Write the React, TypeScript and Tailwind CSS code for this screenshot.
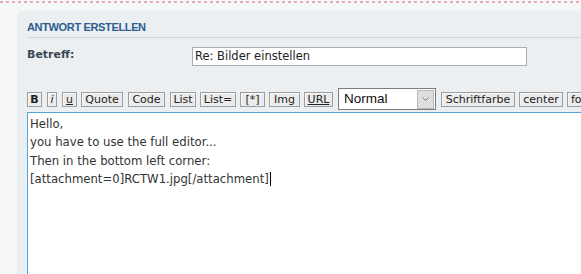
import React from "react";

const btn =
  "h-[15px] shrink-0 border border-[#9d9d9d] bg-[#ebebeb] text-[11px] leading-[13px] text-[#222] flex items-center justify-center shadow-[inset_1px_1px_0_#f8f8f8]";

export default function App() {
  return (
    <div className="w-[581px] h-[274px] overflow-hidden bg-[#f6f7f7] font-['DejaVu_Sans',sans-serif]">
      <div className="h-[2px] mt-[1px] bg-[repeating-linear-gradient(90deg,#e4a8ba_0_3px,transparent_3px_6px)]" />
      <div className="ml-[17px] mt-[8px] h-[300px] rounded-tl-[6px] bg-[#ebeff2] pl-[10px] pt-[10px]">
        <div className="border-b border-[#cfd7dd] pb-[3px] font-['Liberation_Sans',sans-serif] text-[11px] leading-[13px] font-bold tracking-[-0.35px] text-[#2c5d8f]">
          ANTWORT ERSTELLEN
        </div>
        <div className="flex items-start pt-[9px]">
          <div className="mt-[1px] w-[165px] shrink-0 text-[11px] leading-[13px] font-bold text-[#3b4754]">
            Betreff:
          </div>
          <div className="h-[19px] w-[335px] shrink-0 border border-[#a9aeb2] bg-white pl-[2px] text-[11.5px] leading-[17px] text-[#222]">
            Re: Bilder einstellen
          </div>
        </div>
        <div className="mt-[22px] flex h-[22px] items-center whitespace-nowrap">
          <div className={`${btn} w-[15px] font-bold`}>B</div>
          <div className={`${btn} ml-[5px] w-[10px] italic`}>i</div>
          <div className={`${btn} ml-[5px] w-[15px] underline`}>u</div>
          <div className={`${btn} ml-[4px] w-[42px]`}>Quote</div>
          <div className={`${btn} ml-[5px] w-[37px]`}>Code</div>
          <div className={`${btn} ml-[5px] w-[26px]`}>List</div>
          <div className={`${btn} ml-[4px] w-[36px]`}>List=</div>
          <div className={`${btn} ml-[4px] w-[25px]`}>[*]</div>
          <div className={`${btn} ml-[4px] w-[31px]`}>Img</div>
          <div className={`${btn} ml-[4px] w-[29px] underline`}>URL</div>
          <div className="ml-[5px] flex h-[22px] w-[98px] shrink-0 items-center border border-[#7c7c7c] bg-white">
            <span className="flex-1 pl-[5px] font-['Liberation_Sans',sans-serif] text-[13.5px] leading-[16px] text-[#111]">
              Normal
            </span>
            <span className="mr-[1px] flex h-[19px] w-[17px] items-center justify-center border border-[#b9b9b9] bg-[#dedede]">
              <svg width="7" height="4" viewBox="0 0 7 4">
                <path d="M0.5 0.5 L3.5 3.5 L6.5 0.5" fill="none" stroke="#7a7a7a" strokeWidth="1" />
              </svg>
            </span>
          </div>
          <div className={`${btn} ml-[5px] w-[74px]`}>Schriftfarbe</div>
          <div className={`${btn} ml-[4px] w-[44px]`}>center</div>
          <div className={`${btn} ml-[4px] w-[40px] justify-start pl-[3px]`}>font</div>
        </div>
        <div className="mt-[2px] h-[200px] border-l border-t border-[#52a6d8] bg-white pl-[2px] pt-[2px] text-[11.7px] leading-[18.3px] text-[#333]">
          <div>Hello,</div>
          <div>you have to use the full editor...</div>
          <div>Then in the bottom left corner:</div>
          <div className="flex items-center">
            <span>[attachment=0]RCTW1.jpg[/attachment]</span>
            <span className="ml-[1px] inline-block h-[14px] w-[1px] bg-black" />
          </div>
        </div>
      </div>
    </div>
  );
}
